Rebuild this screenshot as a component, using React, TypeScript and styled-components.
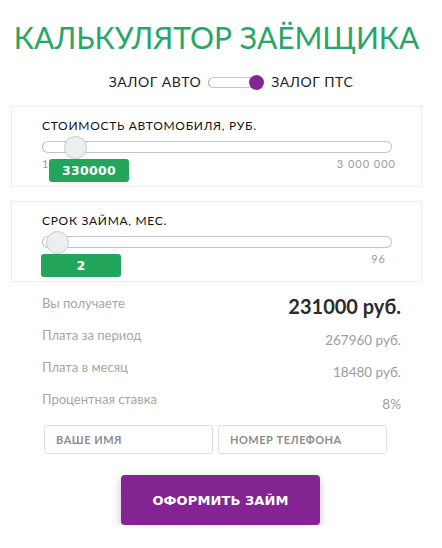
import styled, { createGlobalStyle } from "styled-components";

const GlobalStyle = createGlobalStyle`
  body {
    margin: 0;
    background: #ffffff;
    font-family: Lato, "Open Sans", Arial, sans-serif;
  }
`;

const Wrapper = styled.div`
  width: 411px;
  margin-left: 11px;
  padding-top: 19px;
`;

const Title = styled.h1`
  margin: 0;
  font: 400 30px/36px Lato, sans-serif;
  color: #25a768;
  text-align: center;
`;

const ModeRow = styled.div`
  display: flex;
  justify-content: center;
  align-items: center;
  gap: 7px;
  margin-top: 18px;
  padding-left: 29px;
  height: 18px;
`;

const ModeLabel = styled.span`
  font: 400 14px/18px Lato, sans-serif;
  letter-spacing: 0.5px;
  color: #1d1d1d;
`;

const Switch = styled.div`
  position: relative;
  width: 56px;
  height: 15px;
  .track {
    box-sizing: border-box;
    margin-top: 2px;
    width: 54px;
    height: 11px;
    border: 1px solid #c8c6cf;
    border-left-color: #b9a2c2;
    border-radius: 6px;
    background: #fff;
  }
  .knob {
    position: absolute;
    right: 0;
    top: 0;
    width: 15px;
    height: 15px;
    border-radius: 50%;
    background: #842493;
  }
`;

const Card = styled.div<{ $gap?: number }>`
  box-sizing: border-box;
  margin-top: ${(p) => p.$gap ?? 14}px;
  border: 1px solid #ececec;
  padding: 11px 29px 5px 30px;
`;

const CardLabel = styled.div`
  font: 400 12px/16px Lato, sans-serif;
  letter-spacing: 0.7px;
  color: #111;
  margin-bottom: 7px;
`;

const Track = styled.div`
  position: relative;
  box-sizing: border-box;
  height: 12px;
  border: 1px solid #c3c3cb;
  border-left-color: #bfb2c8;
  border-radius: 6px;
  background: #fff;
`;

const Thumb = styled.div`
  position: absolute;
  top: 50%;
  box-sizing: border-box;
  width: 23px;
  height: 23px;
  margin-top: -11.5px;
  border-radius: 50%;
  border: 1px solid #c6c8ce;
  background: #eceef0;
`;

const Limits = styled.div<{ $right: number }>`
  position: relative;
  display: flex;
  justify-content: space-between;
  align-items: flex-start;
  height: 28px;
  padding-top: 4px;
  box-sizing: border-box;
  margin-right: ${(p) => p.$right}px;
  font: 400 11px/14px Lato, sans-serif;
  letter-spacing: 1px;
  color: #9b9b9b;
`;

const Badge = styled.div<{ $left: number }>`
  position: absolute;
  top: 6px;
  left: ${(p) => p.$left}px;
  width: 80px;
  height: 23px;
  border-radius: 3px;
  background: #22a65c;
  color: #fff;
  font: 700 12.5px/23px "DejaVu Sans", Verdana, sans-serif;
  letter-spacing: 0.3px;
  text-align: center;
`;

const Results = styled.div`
  margin-top: 13px;
  padding: 0 21px 0 31px;
`;

const Row = styled.div`
  display: flex;
  justify-content: space-between;
  align-items: flex-start;
  height: 32px;
`;

const RowLabel = styled.span`
  font: 400 13px/16px Lato, sans-serif;
  color: #a6a6a6;
`;

const RowValue = styled.span<{ $big?: boolean }>`
  padding-top: ${(p) => (p.$big ? 1 : 5)}px;
  font: ${(p) => (p.$big ? "700 20px/20px" : "400 13.5px/16px")} Lato, sans-serif;
  color: ${(p) => (p.$big ? "#2b2b2b" : "#9d9d9d")};
`;

const Inputs = styled.div`
  display: flex;
  gap: 5px;
  margin-top: 2px;
  padding-left: 33px;
`;

const Field = styled.input`
  box-sizing: border-box;
  width: 169px;
  height: 29px;
  padding: 0 11px;
  border: 1px solid #e0e0e0;
  border-radius: 3px;
  outline: none;
  font: 700 11px Lato, sans-serif;
  letter-spacing: 0.5px;
  color: #333;
  &::placeholder {
    color: #8d8d8d;
    text-transform: uppercase;
  }
`;

const ButtonRow = styled.div`
  margin-top: 21px;
  padding-left: 110px;
`;

const SubmitButton = styled.button`
  width: 199px;
  height: 50px;
  border: none;
  border-radius: 4px;
  background: #842493;
  color: #fff;
  font: 700 13px "DejaVu Sans", Verdana, sans-serif;
  letter-spacing: 0.1px;
  box-shadow: 0 4px 9px rgba(0, 0, 0, 0.25);
  cursor: pointer;
`;

type SliderProps = {
  label: string;
  min: string;
  max: string;
  value: string;
  pos: number;
  badgeLeft: number;
  maxRight: number;
  gap?: number;
};

const SliderCard = ({ label, min, max, value, pos, badgeLeft, maxRight, gap }: SliderProps) => (
  <Card $gap={gap}>
    <CardLabel>{label}</CardLabel>
    <Track>
      <Thumb style={{ left: pos }} />
    </Track>
    <Limits $right={maxRight}>
      <span>{min}</span>
      <span>{max}</span>
      <Badge $left={badgeLeft}>{value}</Badge>
    </Limits>
  </Card>
);

const App = () => {
  const rows = [
    { label: "Вы получаете", value: "231000 руб.", big: true },
    { label: "Плата за период", value: "267960 руб." },
    { label: "Плата в месяц", value: "18480 руб." },
    { label: "Процентная ставка", value: "8%" },
  ];
  return (
    <>
      <GlobalStyle />
      <Wrapper>
        <Title>КАЛЬКУЛЯТОР ЗАЁМЩИКА</Title>
        <ModeRow>
          <ModeLabel>ЗАЛОГ АВТО</ModeLabel>
          <Switch>
            <div className="track" />
            <div className="knob" />
          </Switch>
          <ModeLabel>ЗАЛОГ ПТС</ModeLabel>
        </ModeRow>
        <SliderCard
          gap={15}
          label="СТОИМОСТЬ АВТОМОБИЛЯ, РУБ."
          min="1"
          max="3 000 000"
          value="330000"
          pos={21}
          badgeLeft={7}
          maxRight={-4}
        />
        <SliderCard
          label="СРОК ЗАЙМА, МЕС."
          min="1"
          max="96"
          value="2"
          pos={3}
          badgeLeft={-1}
          maxRight={6}
        />
        <Results>
          {rows.map((r) => (
            <Row key={r.label}>
              <RowLabel>{r.label}</RowLabel>
              <RowValue $big={r.big}>{r.value}</RowValue>
            </Row>
          ))}
        </Results>
        <Inputs>
          <Field placeholder="Ваше имя" />
          <Field placeholder="Номер телефона" />
        </Inputs>
        <ButtonRow>
          <SubmitButton>ОФОРМИТЬ ЗАЙМ</SubmitButton>
        </ButtonRow>
      </Wrapper>
    </>
  );
};

export default App;
